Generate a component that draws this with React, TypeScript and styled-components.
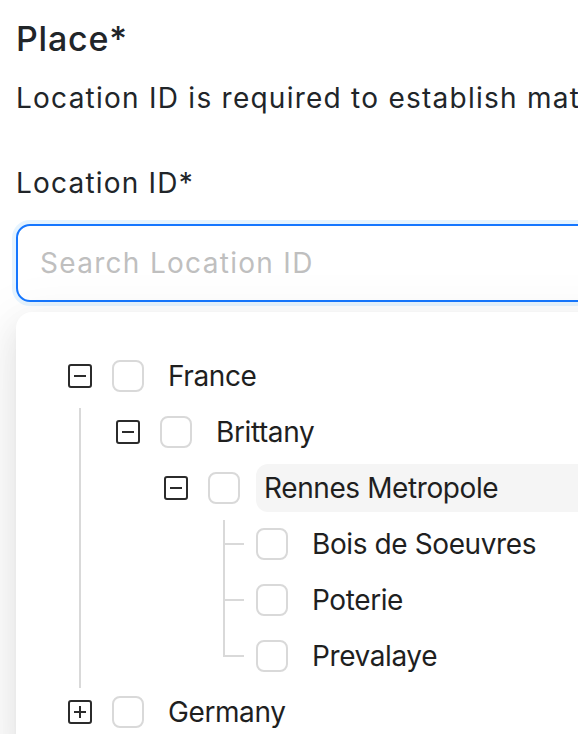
import styled, { createGlobalStyle } from "styled-components";

const GlobalStyle = createGlobalStyle`
  html, body {
    margin: 0;
    padding: 0;
    overflow: hidden;
    background: #ffffff;
  }
  body {
    font-family: Inter, "Noto Sans", "Liberation Sans", sans-serif;
  }
`;

type Node = {
  title: string;
  indents: boolean[];
  kind: "open" | "closed" | "leaf";
  last?: boolean;
  active?: boolean;
};

const nodes: Node[] = [
  { title: "France", indents: [], kind: "open" },
  { title: "Brittany", indents: [true], kind: "open" },
  { title: "Rennes Metropole", indents: [true, false], kind: "open", active: true },
  { title: "Bois de Soeuvres", indents: [true, false, false], kind: "leaf" },
  { title: "Poterie", indents: [true, false, false], kind: "leaf" },
  { title: "Prevalaye", indents: [true, false, false], kind: "leaf", last: true },
  { title: "Germany", indents: [], kind: "closed" },
];

export default function App() {
  return (
    <>
      <GlobalStyle />
      <Page>
        <Heading>Place*</Heading>
        <Description>
          Location ID is required to establish matching with the store's records.
        </Description>
        <Label>Location ID*</Label>
        <SearchInput placeholder="Search Location ID" />
        <Dropdown>
          {nodes.map((node) => (
            <Row key={node.title}>
              {node.indents.map((line, i) => (
                <Indent key={i} $line={line} />
              ))}
              {node.kind === "leaf" ? (
                <LeafSwitcher $last={!!node.last} />
              ) : (
                <Switcher>
                  <SquareIcon open={node.kind === "open"} />
                </Switcher>
              )}
              <Checkbox />
              <Title $active={!!node.active}>{node.title}</Title>
            </Row>
          ))}
        </Dropdown>
      </Page>
    </>
  );
}

function SquareIcon({ open }: { open: boolean }) {
  return (
    <svg width="24" height="24" viewBox="0 0 24 24" fill="none">
      <rect x="1" y="1" width="22" height="22" rx="2" stroke="#2b2b2b" strokeWidth="2" />
      <line x1="6" y1="12" x2="18" y2="12" stroke="#2b2b2b" strokeWidth="2" />
      {!open && <line x1="12" y1="6" x2="12" y2="18" stroke="#2b2b2b" strokeWidth="2" />}
    </svg>
  );
}

// Styled components
const Page = styled.div`
  padding: 19px 0 0 16px;
  width: 760px;
  color: #212529;
`;

const Heading = styled.h2`
  margin: 0;
  font-size: 34px;
  line-height: 40px;
  font-weight: 500;
  letter-spacing: 0.8px;
`;

const Description = styled.p`
  margin: 19px 0 0;
  font-size: 28px;
  line-height: 40px;
  letter-spacing: 1.25px;
  white-space: nowrap;
`;

const Label = styled.label`
  display: block;
  margin-top: 45px;
  font-size: 28px;
  line-height: 40px;
  letter-spacing: 1.2px;
`;

const SearchInput = styled.input`
  display: block;
  box-sizing: border-box;
  margin-top: 21px;
  width: 100%;
  height: 78px;
  padding: 0 22px;
  border: 2px solid #1677ff;
  border-radius: 14px;
  box-shadow: 0 0 0 4px rgba(5, 145, 255, 0.1);
  outline: none;
  font-family: inherit;
  font-size: 28px;
  letter-spacing: 1.3px;
  color: #1f1f1f;
  background: #ffffff;

  &::placeholder {
    color: #bfbfbf;
  }
`;

const Dropdown = styled.div`
  position: relative;
  z-index: 2;
  margin-top: 10px;
  padding: 40px 0 16px 52px;
  border-radius: 16px;
  background: #ffffff;
  box-shadow: 0 12px 32px 0 rgba(0, 0, 0, 0.08),
    0 6px 12px -8px rgba(0, 0, 0, 0.12), 0 18px 56px 16px rgba(0, 0, 0, 0.05);
`;

const Row = styled.div`
  display: flex;
  align-items: flex-start;
  height: 56px;
  color: #1f1f1f;
`;

const Indent = styled.span<{ $line: boolean }>`
  position: relative;
  flex: 0 0 48px;
  align-self: stretch;

  &::before {
    content: "";
    display: ${(p) => (p.$line ? "block" : "none")};
    position: absolute;
    left: 11px;
    top: 0;
    bottom: 0;
    border-left: 2px solid #d9d9d9;
  }
`;

const Switcher = styled.span`
  display: flex;
  align-items: center;
  justify-content: center;
  flex: 0 0 24px;
  height: 48px;
`;

const LeafSwitcher = styled.span<{ $last: boolean }>`
  position: relative;
  flex: 0 0 24px;
  align-self: stretch;

  &::before {
    content: "";
    position: absolute;
    left: 11px;
    top: 0;
    height: ${(p) => (p.$last ? "25px" : "56px")};
    border-left: 2px solid #d9d9d9;
  }

  &::after {
    content: "";
    position: absolute;
    left: 12px;
    top: 23px;
    width: 20px;
    border-top: 2px solid #d9d9d9;
  }
`;

const Checkbox = styled.span`
  box-sizing: border-box;
  flex: 0 0 32px;
  height: 32px;
  margin: 8px 16px 0 20px;
  border: 2px solid #d9d9d9;
  border-radius: 8px;
  background: #ffffff;
`;

const Title = styled.span<{ $active: boolean }>`
  flex: 1;
  height: 48px;
  padding: 0 8px;
  border-radius: 12px;
  font-size: 28px;
  line-height: 48px;
  letter-spacing: -0.4px;
  white-space: nowrap;
  background: ${(p) => (p.$active ? "#f5f5f5" : "transparent")};
`;
